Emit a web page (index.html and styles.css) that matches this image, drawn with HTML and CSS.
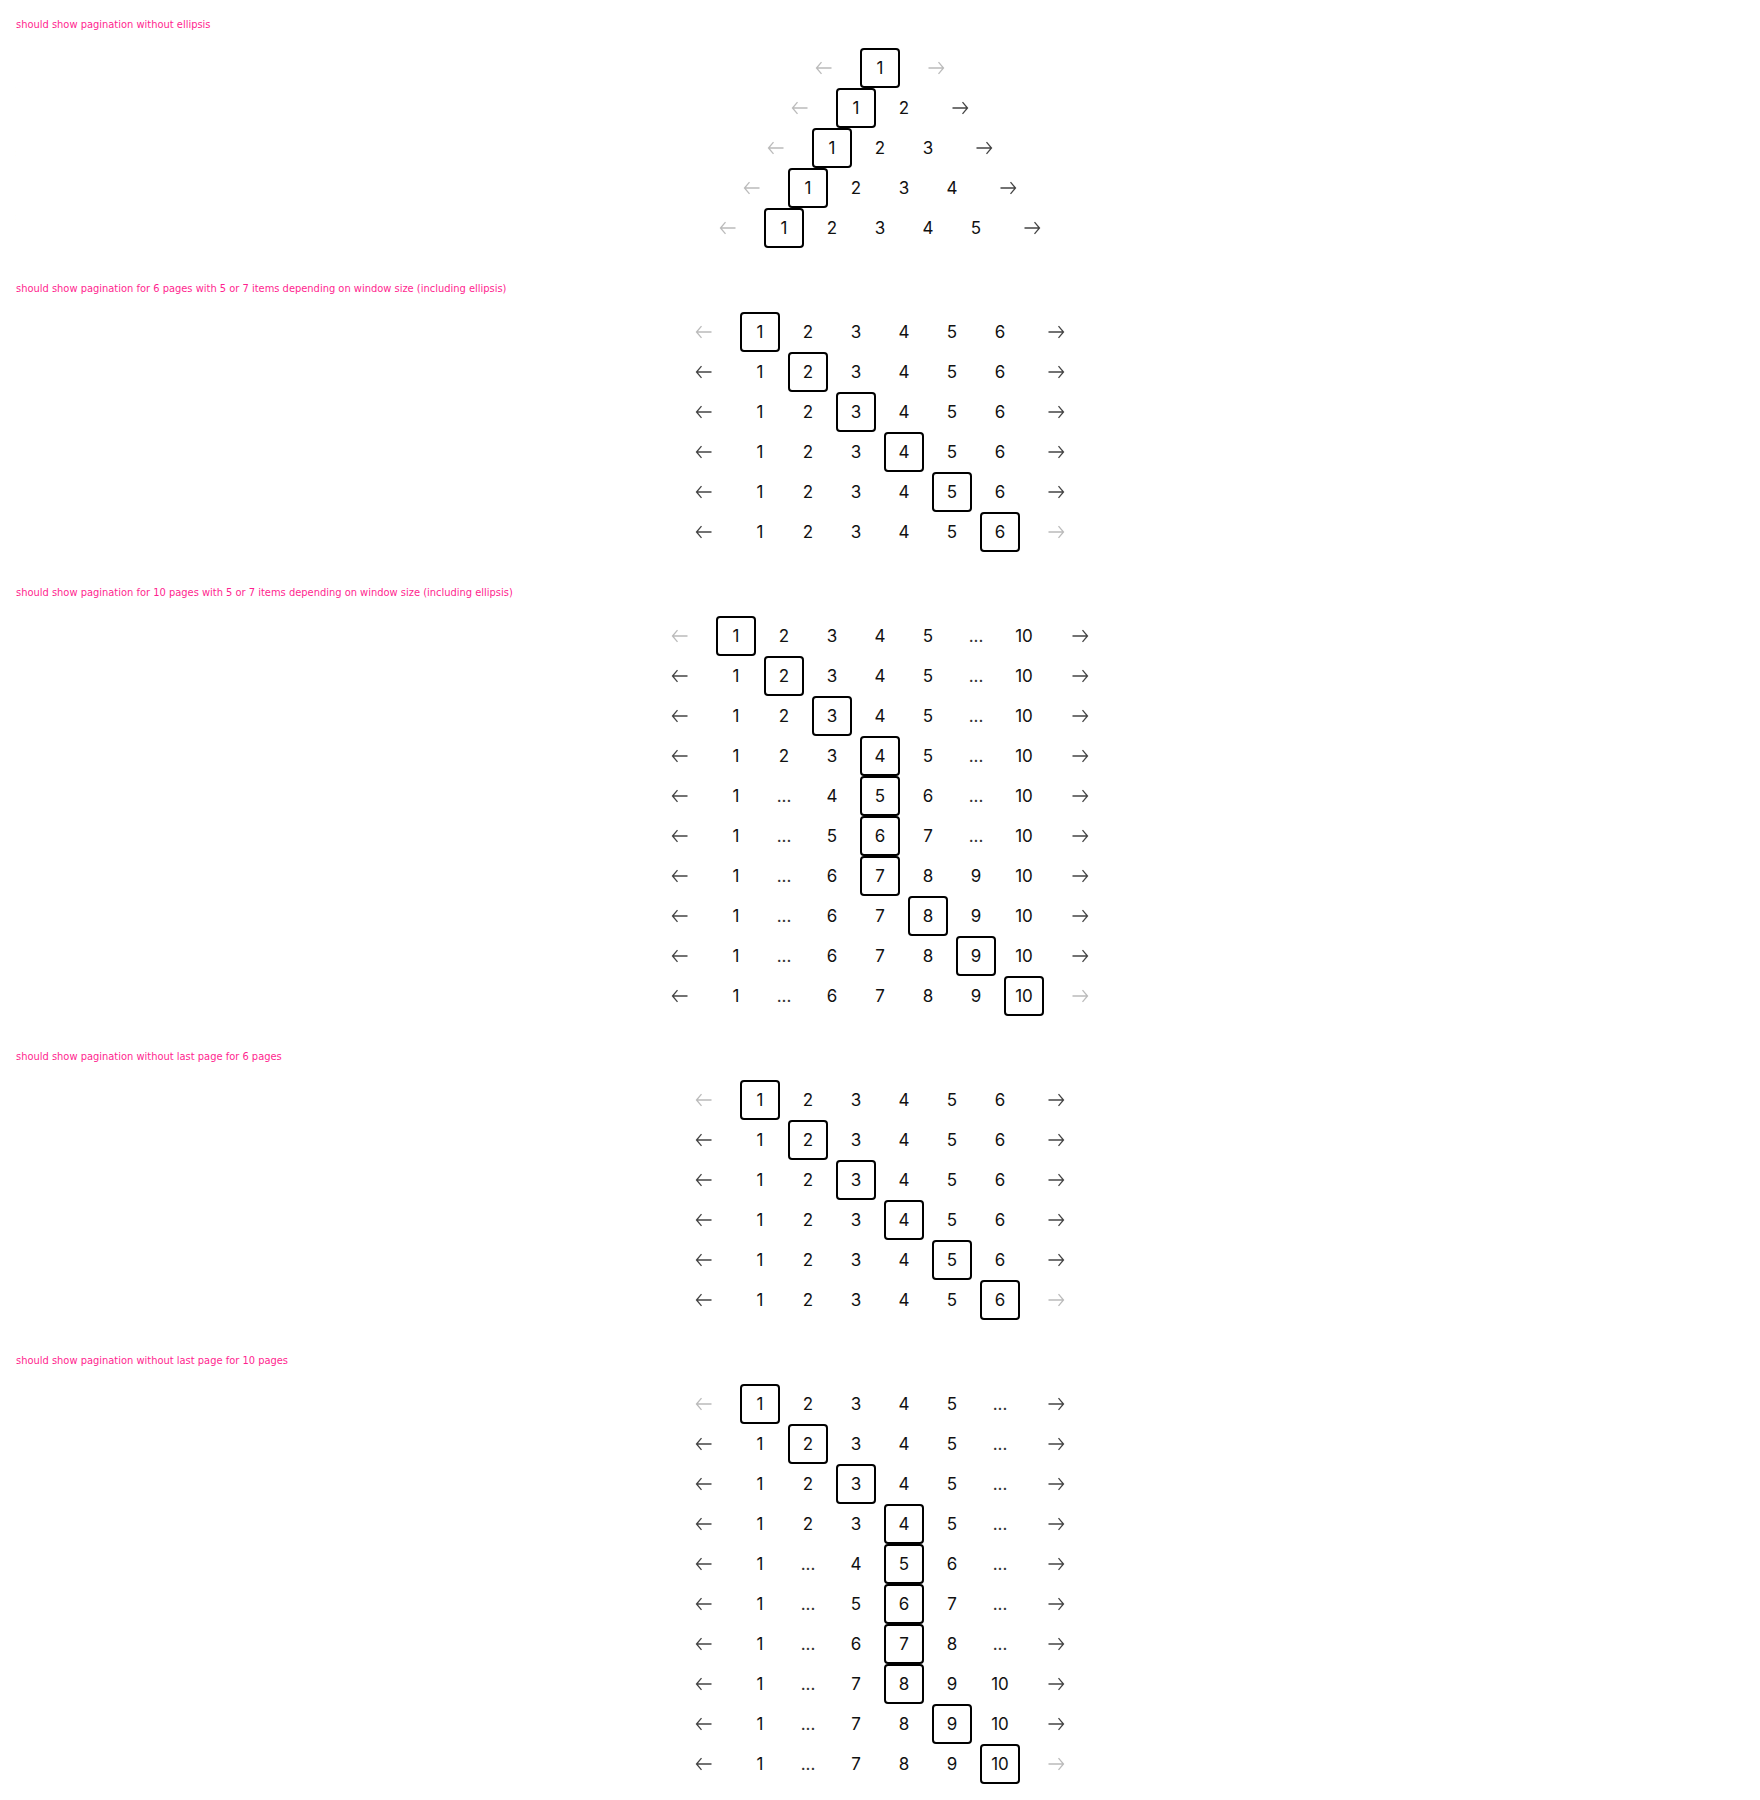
FILE: index.html
```html
<!DOCTYPE html>
<html lang="en">
<head>
    <meta charset="UTF-8">
    <meta name="viewport" content="width=device-width, initial-scale=1.0">
    <title>Pagination stories</title>
    <link rel="stylesheet" href="styles.css">
</head>
<body>

<section class="story">
    <p class="story-title">should show pagination without ellipsis</p>
    <div class="story-rows" id="no-ellipsis"></div>
</section>

<section class="story">
    <p class="story-title">should show pagination for 6 pages with 5 or 7 items depending on window size (including ellipsis)</p>
    <div class="story-rows" id="six-pages"></div>
</section>

<section class="story">
    <p class="story-title">should show pagination for 10 pages with 5 or 7 items depending on window size (including ellipsis)</p>
    <div class="story-rows" id="ten-pages"></div>
</section>

<section class="story">
    <p class="story-title">should show pagination without last page for 6 pages</p>
    <div class="story-rows" id="six-no-last"></div>
</section>

<section class="story">
    <p class="story-title">should show pagination without last page for 10 pages</p>
    <div class="story-rows" id="ten-no-last"></div>
</section>

<script>
    // [total, current, visible items]
    const stories = {
        'no-ellipsis': [
            [1, 1, '1'],
            [2, 1, '1 2'],
            [3, 1, '1 2 3'],
            [4, 1, '1 2 3 4'],
            [5, 1, '1 2 3 4 5']
        ],
        'six-pages': [1, 2, 3, 4, 5, 6].map(c => [6, c, '1 2 3 4 5 6']),
        'ten-pages': [
            [10, 1, '1 2 3 4 5 ... 10'],
            [10, 2, '1 2 3 4 5 ... 10'],
            [10, 3, '1 2 3 4 5 ... 10'],
            [10, 4, '1 2 3 4 5 ... 10'],
            [10, 5, '1 ... 4 5 6 ... 10'],
            [10, 6, '1 ... 5 6 7 ... 10'],
            [10, 7, '1 ... 6 7 8 9 10'],
            [10, 8, '1 ... 6 7 8 9 10'],
            [10, 9, '1 ... 6 7 8 9 10'],
            [10, 10, '1 ... 6 7 8 9 10']
        ],
        'six-no-last': [1, 2, 3, 4, 5, 6].map(c => [6, c, '1 2 3 4 5 6']),
        'ten-no-last': [
            [10, 1, '1 2 3 4 5 ...'],
            [10, 2, '1 2 3 4 5 ...'],
            [10, 3, '1 2 3 4 5 ...'],
            [10, 4, '1 2 3 4 5 ...'],
            [10, 5, '1 ... 4 5 6 ...'],
            [10, 6, '1 ... 5 6 7 ...'],
            [10, 7, '1 ... 6 7 8 ...'],
            [10, 8, '1 ... 7 8 9 10'],
            [10, 9, '1 ... 7 8 9 10'],
            [10, 10, '1 ... 7 8 9 10']
        ]
    };

    const arrowLeft = '<svg width="20" height="20" viewBox="0 0 20 20" fill="none" stroke="currentColor" stroke-width="1.3"><path d="M2.5 10h15M7.5 4.2L2.5 10l5 5.8"/></svg>';
    const arrowRight = '<svg width="20" height="20" viewBox="0 0 20 20" fill="none" stroke="currentColor" stroke-width="1.3"><path d="M2.5 10h15M12.5 4.2l5 5.8-5 5.8"/></svg>';

    function buildRow(total, current, items) {
        let html = `<span class="arrow${current === 1 ? ' disabled' : ''}">${arrowLeft}</span>`;
        items.split(' ').forEach(item => {
            if (item === '...') {
                html += '<span class="page ellipsis">...</span>';
            } else if (Number(item) === current) {
                html += `<span class="page current">${item}</span>`;
            } else {
                html += `<span class="page">${item}</span>`;
            }
        });
        html += `<span class="arrow${current === total ? ' disabled' : ''}">${arrowRight}</span>`;
        return `<nav class="pagination">${html}</nav>`;
    }

    Object.keys(stories).forEach(id => {
        const container = document.getElementById(id);
        container.innerHTML = stories[id].map(r => buildRow(r[0], r[1], r[2])).join('');
    });
</script>

</body>
</html>
```

FILE: styles.css
```css
body {
    font-family: Inter, "Noto Sans", sans-serif;
    color: #111;
    background: #fff;
    margin: 0;
    padding: 0;
}

.story {
    padding: 17px 15px 16px 16px;
}

.story-title {
    margin: 0 0 15px;
    font-family: "Liberation Sans Narrow", "DejaVu Sans Condensed", "Liberation Sans", sans-serif;
    font-size: 11px;
    line-height: 16px;
    color: #ff1f8f;
}

.pagination {
    display: flex;
    justify-content: center;
    align-items: center;
    gap: 8px;
    height: 40px;
    padding-right: 1px;
}

.page {
    width: 40px;
    height: 40px;
    box-sizing: border-box;
    display: flex;
    align-items: center;
    justify-content: center;
    font-size: 17px;
}

.page.current {
    border: 2px solid #000;
    border-radius: 4px;
}

.page.ellipsis {
    color: #333;
}

.arrow {
    width: 56px;
    height: 40px;
    display: flex;
    align-items: center;
    justify-content: center;
    color: #444;
}

.arrow.disabled {
    color: #bbb;
}
```
